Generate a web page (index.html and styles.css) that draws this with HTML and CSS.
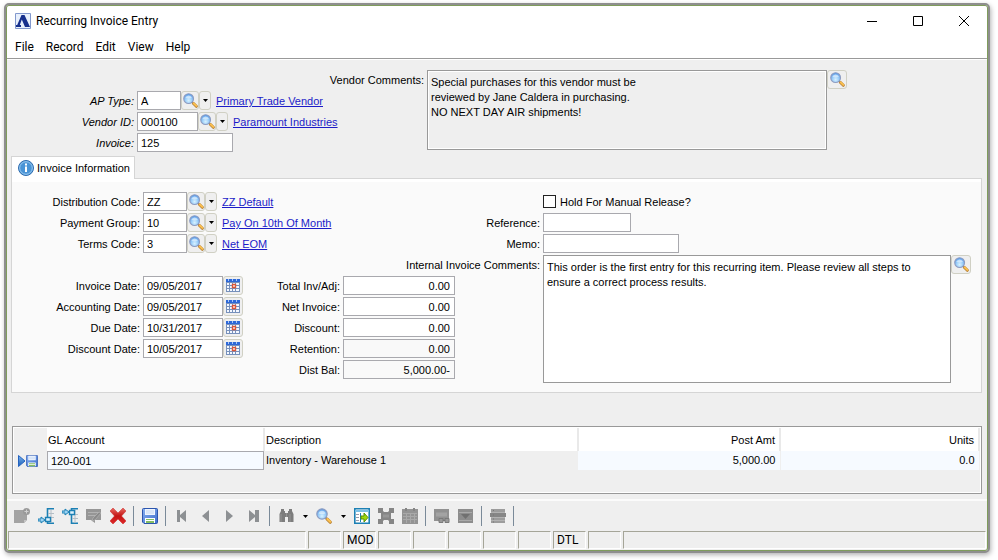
FILE: index.html
```html
<!DOCTYPE html>
<html lang="en">
<head>
    <meta charset="utf-8">
    <title>Recurring Invoice Entry</title>
    <link rel="stylesheet" href="styles.css">
</head>
<body>
    <!-- shared icons -->
    <svg class="defs" aria-hidden="true">
        <defs>
            <radialGradient id="lens" cx="50%" cy="70%" r="65%">
                <stop offset="0" stop-color="#d9f2ff"/>
                <stop offset="0.6" stop-color="#90c8f8"/>
                <stop offset="1" stop-color="#5a9be8"/>
            </radialGradient>
            <linearGradient id="blue" x1="0" y1="0" x2="0" y2="1">
                <stop offset="0" stop-color="#7ab4ee"/>
                <stop offset="1" stop-color="#1d5fb8"/>
            </linearGradient>
            <linearGradient id="disk" x1="0" y1="0" x2="1" y2="1">
                <stop offset="0" stop-color="#85aef0"/>
                <stop offset="1" stop-color="#3f70cc"/>
            </linearGradient>
            <linearGradient id="red" x1="0" y1="0" x2="0" y2="1">
                <stop offset="0" stop-color="#e86a62"/>
                <stop offset="0.5" stop-color="#c41414"/>
                <stop offset="1" stop-color="#df2a2a"/>
            </linearGradient>
        </defs>
        <symbol id="i-search" viewBox="0 0 16 16">
            <path d="M9.5 9.5l2 2" stroke="#7c8698" stroke-width="2"/>
            <path d="M11.2 11.2l3 3" stroke="#b98236" stroke-width="3.2" stroke-linecap="round"/>
            <path d="M11.4 11l2.8 2.8" stroke="#fbc04e" stroke-width="2" stroke-linecap="round"/>
            <circle cx="6" cy="6" r="5.2" fill="url(#lens)" stroke="#8e9cc0" stroke-width="1.2"/>
            <path d="M2.5 5.4a3.6 3.6 0 0 1 7 0q-3.500 1-7 0z" fill="#fff" opacity=".5"/>
        </symbol>
        <symbol id="i-cal" viewBox="0 0 14 13">
            <path d="M0 0h14v13H0z" fill="#7690bb"/>
            <path d="M0 0h14v3H0z" fill="#2d68d8"/>
            <path d="M2 0h1v2H2zM6 0h1v2H6zM10 0h1v2h-1z" fill="#a9c8f6"/>
            <path d="M1 4h2v2H1zM4 4h2v2H4zM7 4h2v2H7zM10 4h3v2h-3zM1 7h2v2H1zM4 7h2v2H4zM10 7h3v2h-3zM1 10h2v2H1zM4 10h2v2H4zM7 10h2v2H7zM10 10h3v2h-3z" fill="#f4f8ff"/>
            <path d="M6.5 5.5h3v3h-3z" fill="#fff" stroke="#db5638" stroke-width="1.4"/>
        </symbol>
        <symbol id="i-disk" viewBox="0 0 16 16">
            <path d="M1.5.5h13a1 1 0 0 1 1 1v13a1 1 0 0 1-1 1H2l-1.500-1.500v-12.500a1 1 0 0 1 1-1z" fill="url(#disk)" stroke="#2c55ad"/>
            <path d="M3 1h10v6H3z" fill="#eef5ff"/>
            <path d="M4 3h8M4 5h8" stroke="#c4d7f2"/>
            <path d="M3 10h10v5H3z" fill="#fff"/>
            <path d="M4 11h8v1H4zM4 13h8v2H4z" fill="#84bd62"/>
        </symbol>
        <symbol id="i-down" viewBox="0 0 5 3">
            <path d="M0 0h5L2.500 3z" fill="#000"/>
        </symbol>
    </svg>

    <div class="window">
        <header class="titlebar">
            <svg class="logo" viewBox="0 0 16 16" aria-hidden="true">
                <path d="M.5.5h15v15H.5z" fill="#e8f0fc" stroke="#8298cd"/>
                <path d="M6.500 2h3L15 14h-5L6.800 6.500 4.800 12H6v2H1v-2h1.200z" fill="#17308d"/>
            </svg>
            <h1>Recurring Invoice Entry</h1>
            <div class="window-buttons">
                <button type="button" aria-label="Minimize"><svg viewBox="0 0 12 12"><path d="M1 6.500h10" stroke="#000"/></svg></button>
                <button type="button" aria-label="Maximize"><svg viewBox="0 0 12 12"><path d="M1.500 1.500h9v9h-9z" fill="none" stroke="#000"/></svg></button>
                <button type="button" aria-label="Close"><svg viewBox="0 0 12 12"><path d="M1 1l10 10M11 1L1 11" stroke="#000"/></svg></button>
            </div>
        </header>

        <nav class="menubar">
            <button type="button">File</button>
            <button type="button">Record</button>
            <button type="button">Edit</button>
            <button type="button">View</button>
            <button type="button">Help</button>
        </nav>

        <section class="vendor">
            <div class="keys">
                <label class="comments-label" for="vendorComments">Vendor Comments:</label>
                <div class="row">
                    <label for="apType">AP Type:</label>
                    <input type="text" id="apType" class="w-code" value="A">
                    <button type="button" class="pick find" aria-label="Find AP type"><svg><use href="#i-search"/></svg></button>
                    <button type="button" class="drop" aria-label="AP type list"><svg><use href="#i-down"/></svg></button>
                    <a href="#">Primary Trade Vendor</a>
                </div>
                <div class="row">
                    <label for="vendorId">Vendor ID:</label>
                    <input type="text" id="vendorId" class="w-id" value="000100">
                    <button type="button" class="pick find" aria-label="Find vendor"><svg><use href="#i-search"/></svg></button>
                    <button type="button" class="drop" aria-label="Vendor list"><svg><use href="#i-down"/></svg></button>
                    <a href="#">Paramount Industries</a>
                </div>
                <div class="row">
                    <label for="invoice">Invoice:</label>
                    <input type="text" id="invoice" class="w-invoice" value="125">
                </div>
            </div>
            <textarea id="vendorComments" class="vendor-comments" readonly>Special purchases for this vendor must be
reviewed by Jane Caldera in purchasing.
NO NEXT DAY AIR shipments!</textarea>
            <button type="button" class="pick" aria-label="Open vendor comments"><svg><use href="#i-search"/></svg></button>
        </section>

        <div class="tabs">
            <button type="button" class="tab">
                <svg viewBox="0 0 16 16" aria-hidden="true">
                    <circle cx="8" cy="8" r="7.500" fill="#4a94d6" stroke="#2f6cae"/>
                    <circle cx="8" cy="8" r="6.300" fill="none" stroke="#9ccbf2"/>
                    <path d="M7 6.500h2V12H7zM7 3.500h2v2H7z" fill="#fff"/>
                </svg>
                Invoice Information
            </button>
        </div>

        <main class="panel">
            <div class="terms">
                <div class="row">
                    <label for="distCode">Distribution Code:</label>
                    <input type="text" id="distCode" class="w-code" value="ZZ">
                    <button type="button" class="pick find" aria-label="Find distribution code"><svg><use href="#i-search"/></svg></button>
                    <button type="button" class="drop" aria-label="Distribution code list"><svg><use href="#i-down"/></svg></button>
                    <a href="#">ZZ Default</a>
                </div>
                <div class="row">
                    <label for="payGroup">Payment Group:</label>
                    <input type="text" id="payGroup" class="w-code" value="10">
                    <button type="button" class="pick find" aria-label="Find payment group"><svg><use href="#i-search"/></svg></button>
                    <button type="button" class="drop" aria-label="Payment group list"><svg><use href="#i-down"/></svg></button>
                    <a href="#">Pay On 10th Of Month</a>
                </div>
                <div class="row">
                    <label for="termsCode">Terms Code:</label>
                    <input type="text" id="termsCode" class="w-code" value="3">
                    <button type="button" class="pick find" aria-label="Find terms code"><svg><use href="#i-search"/></svg></button>
                    <button type="button" class="drop" aria-label="Terms code list"><svg><use href="#i-down"/></svg></button>
                    <a href="#">Net EOM</a>
                </div>

                <div class="figures">
                    <div class="dates">
                        <div class="row">
                            <label for="invoiceDate">Invoice Date:</label>
                            <input type="text" id="invoiceDate" class="w-date" value="09/05/2017">
                            <button type="button" class="pick" aria-label="Pick invoice date"><svg class="cal"><use href="#i-cal"/></svg></button>
                        </div>
                        <div class="row">
                            <label for="acctDate">Accounting Date:</label>
                            <input type="text" id="acctDate" class="w-date" value="09/05/2017">
                            <button type="button" class="pick" aria-label="Pick accounting date"><svg class="cal"><use href="#i-cal"/></svg></button>
                        </div>
                        <div class="row">
                            <label for="dueDate">Due Date:</label>
                            <input type="text" id="dueDate" class="w-date" value="10/31/2017">
                            <button type="button" class="pick" aria-label="Pick due date"><svg class="cal"><use href="#i-cal"/></svg></button>
                        </div>
                        <div class="row">
                            <label for="discDate">Discount Date:</label>
                            <input type="text" id="discDate" class="w-date" value="10/05/2017">
                            <button type="button" class="pick" aria-label="Pick discount date"><svg class="cal"><use href="#i-cal"/></svg></button>
                        </div>
                    </div>
                    <div class="totals">
                        <div class="row">
                            <label for="total">Total Inv/Adj:</label>
                            <input type="text" id="total" value="0.00">
                        </div>
                        <div class="row">
                            <label for="net">Net Invoice:</label>
                            <input type="text" id="net" value="0.00">
                        </div>
                        <div class="row">
                            <label for="discount">Discount:</label>
                            <input type="text" id="discount" value="0.00">
                        </div>
                        <div class="row">
                            <label for="retention">Retention:</label>
                            <input type="text" id="retention" value="0.00" readonly>
                        </div>
                        <div class="row">
                            <label for="distBal">Dist Bal:</label>
                            <input type="text" id="distBal" value="5,000.00-" readonly>
                        </div>
                    </div>
                </div>
            </div>

            <div class="notes">
                <div class="row hold">
                    <input type="checkbox" id="hold">
                    <label for="hold">Hold For Manual Release?</label>
                </div>
                <div class="row">
                    <label for="reference">Reference:</label>
                    <input type="text" id="reference" class="w-ref">
                </div>
                <div class="row">
                    <label for="memo">Memo:</label>
                    <input type="text" id="memo" class="w-memo">
                </div>
                <div class="row tall">
                    <label for="comments">Internal Invoice Comments:</label>
                    <textarea id="comments">This order is the first entry for this recurring item. Please review all steps to
ensure a correct process results.</textarea>
                    <button type="button" class="pick" aria-label="Open internal comments"><svg><use href="#i-search"/></svg></button>
                </div>
            </div>
        </main>

        <div class="lines">
            <table>
                <thead>
                    <tr>
                        <td class="marker"></td>
                        <th class="account">GL Account</th>
                        <th class="desc">Description</th>
                        <th class="amount">Post Amt</th>
                        <th class="units">Units</th>
                    </tr>
                </thead>
                <tbody>
                    <tr>
                        <td class="marker">
                            <svg viewBox="0 0 20 14" aria-hidden="true">
                                <path d="M.5 1.500L7 7 .5 12.500z" fill="url(#blue)" stroke="#2463c0"/>
                                <use href="#i-disk" x="8" y="1" width="12" height="12"/>
                            </svg>
                        </td>
                        <td><input type="text" aria-label="GL Account" value="120-001"></td>
                        <td class="desc">Inventory - Warehouse 1</td>
                        <td class="amount">5,000.00</td>
                        <td class="units">0.0</td>
                    </tr>
                </tbody>
            </table>
        </div>

        <div class="toolbar">
            <button type="button" aria-label="New record"><svg viewBox="0 0 16 16"><path d="M0 2h10v3h3v7l-3 3H0z" fill="#a3a3a3"/><path d="M10 15v-3h3z" fill="#c4c4c4"/><circle cx="12.500" cy="3.500" r="3.500" fill="#999"/><path d="M12.500 1.500v4M10.500 3.500h4" stroke="#d0d0d0"/></svg></button>
            <button type="button" aria-label="Insert row below"><svg viewBox="0 0 16 16"><path d="M16 .8H9.500v14.400H16" fill="none" stroke="#1c80b4" stroke-width="1.600"/><path d="M10 5.500h6M10 9.500h6M13 2v13" stroke="#b4bec6"/><path d="M0 11h3V9l4 3-4 3v-2H0z" fill="#9bd3f4" stroke="#1c80b4"/><path d="M7.500 9.500h5v4h-5z" fill="#dff2fd" stroke="#1c80b4" stroke-width="1.400"/></svg></button>
            <button type="button" aria-label="Insert row above"><svg viewBox="0 0 16 16"><path d="M16 .8H9.500v14.400H16" fill="none" stroke="#1c80b4" stroke-width="1.600"/><path d="M10 6.500h6M10 10.500h6M13 2v13" stroke="#b4bec6"/><path d="M0 3h3V1l4 3-4 3V5H0z" fill="#9bd3f4" stroke="#1c80b4"/><path d="M7.500 2.500h5v4h-5z" fill="#dff2fd" stroke="#1c80b4" stroke-width="1.400"/></svg></button>
            <button type="button" aria-label="Edit row"><svg viewBox="0 0 16 16"><path d="M0 1h15v11H9v3l-4-3H0z" fill="#969696"/><path d="M2 4.500h11M2 7.500h8" stroke="#b2b2b2"/><path d="M15 5l-6 7-3 1 1-3 6-6z" fill="#8a8a8a" stroke="#b4b4b4" stroke-width=".7"/></svg></button>
            <button type="button" aria-label="Delete"><svg viewBox="0 0 16 16"><path d="M3 0l5 5 5-5 3 3-4.500 5L16 13l-3 3-5-5-5 5-3-3 4.500-5L0 3z" fill="url(#red)" stroke="#c22" stroke-width=".5"/></svg></button>
            <span class="sep"></span>
            <button type="button" aria-label="Save"><svg><use href="#i-disk"/></svg></button>
            <span class="sep"></span>
            <button type="button" aria-label="First"><svg viewBox="0 0 16 16"><path d="M3 2h3v5l6-5v12L6 9v5H3z" fill="#8d9093"/></svg></button>
            <button type="button" aria-label="Previous"><svg viewBox="0 0 16 16"><path d="M11 2v12L4 8z" fill="#8d9093"/></svg></button>
            <button type="button" aria-label="Next"><svg viewBox="0 0 16 16"><path d="M4 2v12l7-6z" fill="#8d9093"/></svg></button>
            <button type="button" aria-label="Last"><svg viewBox="0 0 16 16"><path d="M3 2l6 5V2h4v12H9V9l-6 5z" fill="#8d9093"/></svg></button>
            <span class="sep"></span>
            <button type="button" aria-label="Find"><svg viewBox="0 0 16 16"><path d="M3 1h3v2h1v2h3V3h1V1h3v2l1.500 3v8H10V9H7v5H1.500V6L3 3z" fill="#7d7d7d"/><path d="M3 6v8M12 6v8M8.500 5v4" stroke="#959595"/></svg></button>
            <button type="button" class="arrow" aria-label="Find options"><svg><use href="#i-down"/></svg></button>
            <button type="button" aria-label="Inquiry"><svg><use href="#i-search"/></svg></button>
            <button type="button" class="arrow" aria-label="Inquiry options"><svg><use href="#i-down"/></svg></button>
            <button type="button" aria-label="Drill down"><svg viewBox="0 0 16 16"><path d="M.8.8h14.400v14.400H.8z" fill="#fff" stroke="#1c80b4" stroke-width="1.600"/><path d="M1 3h14" stroke="#7cc0e6" stroke-width="2"/><path d="M2 6.500h3M2 9.500h3M2 12.500h3" stroke="#99a"/><path d="M6.500 5v9" stroke="#1c80b4"/><path d="M7 8h3V5l4 4.500-4 4.500v-3H7z" fill="#9fd80c" stroke="#578f05"/></svg></button>
            <button type="button" aria-label="Workflow"><svg viewBox="0 0 16 16"><path d="M1 1l14 14M15 1L1 15" stroke="#8e8e8e" stroke-width="3"/><path d="M0 0h5v5H0zM11 0h5v5h-5zM0 11h5v5H0zM11 11h5v5h-5zM3 4h10v8H3z" fill="#868686"/><path d="M5 6.500h6v3H5z" fill="#979797"/></svg></button>
            <button type="button" aria-label="Calendar"><svg viewBox="0 0 16 16"><path d="M0 1h16v15H0z" fill="#949494"/><path d="M1 5.500h14M1 8.500h14M1 11.500h14M4.500 5v10M8.500 5v10M12.500 5v10" stroke="#a9a9a9"/><path d="M3 0h2v3H3zM11 0h2v3h-2z" fill="#858585"/></svg></button>
            <span class="sep"></span>
            <button type="button" aria-label="View document"><svg viewBox="0 0 16 16"><path d="M0 1h15v12H0z" fill="#919191"/><path d="M2 4.500h11v4H2z" fill="#a3a3a3"/><path d="M5 10.500h4v4H5zM11 10.500h4v4h-4z" fill="#999" stroke="#7a7a7a"/><path d="M9 12.500h2" stroke="#777"/></svg></button>
            <button type="button" aria-label="Filter"><svg viewBox="0 0 16 16"><path d="M0 1h15v14H0z" fill="#8d8d8d"/><path d="M1 4.500h13M1 12.500h13" stroke="#a9a9a9"/><path d="M3 6h9l-4.500 5z" fill="#707070"/></svg></button>
            <span class="sep"></span>
            <button type="button" aria-label="List"><svg viewBox="0 0 16 16"><path d="M1 1h14v14H1z" fill="#9c9c9c"/><path d="M0 5h16v4H0z" fill="#868686"/><path d="M1 4.500h14M1 9.500h14M1 12.500h14" stroke="#b2b2b2"/><path d="M3 2.500h1M3 7h1M3 11h1M3 14h1" stroke="#777"/></svg></button>
            <span class="sep"></span>
        </div>

        <footer class="status">
            <span class="wide"></span>
            <span></span>
            <span>MOD</span>
            <span></span>
            <span></span>
            <span></span>
            <span></span>
            <span></span>
            <span>DTL</span>
            <span></span>
            <span class="rest"></span>
        </footer>
    </div>
</body>
</html>
```
FILE: styles.css
```css
* {
    box-sizing: border-box;
}

body {
    margin: 0;
    padding: 3px 8px 7px 4px;
    min-height: 100vh;
    display: flex;
    background: #fff;
    color: #000;
    font: 11px/15px "Liberation Sans", Arial, sans-serif;
}

.defs {
    position: absolute;
    width: 0;
    height: 0;
}

svg {
    display: block;
    width: 16px;
    height: 16px;
}

button, input, textarea {
    font: inherit;
    color: inherit;
    margin: 0;
}

button {
    border: 0;
    padding: 0;
    background: none;
}

a {
    color: #1c1cc8;
}

/* window frame */
.window {
    flex: 1;
    display: flex;
    flex-direction: column;
    padding: 1px;
    border: 2px solid #8e8e8e;
    border-radius: 5px;
    background: #efefef;
    box-shadow: inset 0 0 0 1px #7f9c5c, 1px 2px 5px rgba(0, 0, 0, 0.3);
}

.titlebar {
    display: flex;
    align-items: center;
    height: 30px;
    padding-left: 8px;
    background: #fff;
    border-radius: 3px 3px 0 0;
}

.titlebar h1 {
    flex: 1;
    margin: 0 0 0 5px;
    font: 12px/16px Roboto, "Open Sans", sans-serif;
}

.window-buttons {
    display: flex;
}

.window-buttons button {
    width: 46px;
    height: 30px;
    display: flex;
    align-items: center;
    justify-content: center;
}

.window-buttons svg {
    width: 12px;
    height: 12px;
}

.menubar {
    display: flex;
    gap: 12px;
    height: 23px;
    padding-left: 8px;
    background: #fff;
    border-bottom: 1px solid #999;
    box-shadow: 0 1px #fff;
    font: 12px/22px Roboto, "Open Sans", sans-serif;
}

/* form rows */
.row {
    display: flex;
    align-items: center;
    height: 19px;
    margin-bottom: 2px;
}

.row label {
    width: 128px;
    margin-right: 3px;
    text-align: right;
    white-space: nowrap;
}

.row label, .row a {
    line-height: 17px;
    padding-top: 2px;
}

.row a {
    margin-left: 5px;
    white-space: nowrap;
}

input[type="text"] {
    height: 19px;
    padding: 0 3px;
    border: 1px solid #a9a9ae;
    border-radius: 0;
    background: #fff;
}

input[readonly] {
    background: #f9f9f9;
}

textarea {
    padding: 4px 3px;
    border: 1px solid #999;
    border-radius: 0;
    background: #fff;
    resize: none;
}

.w-code { width: 44px; }
.w-id { width: 61px; }
.w-invoice { width: 96px; }
.w-date { width: 80px; }
.w-ref { width: 88px; }
.w-memo { width: 136px; }

.pick, .drop {
    display: flex;
    align-items: center;
    justify-content: center;
    flex: none;
    height: 19px;
    border: 1px solid #d0d0c4;
    border-radius: 3px;
    background: #efefef;
}

.pick {
    width: 20px;
}

.find {
    width: 18px;
}

.pick svg {
    width: 15px;
    height: 15px;
}

.pick .cal {
    width: 14px;
    height: 13px;
}

.drop {
    width: 12px;
}

.drop svg, .arrow svg {
    width: 5px;
    height: 3px;
}

/* vendor header */
.vendor {
    display: flex;
    align-items: flex-start;
    padding: 11px 0 2px;
}

.keys {
    width: 417px;
    margin-right: 3px;
}

.keys .row label {
    width: 127px;
    font-style: italic;
}

.comments-label {
    display: block;
    height: 21px;
    line-height: 20px;
    text-align: right;
}

.vendor-comments {
    width: 400px;
    height: 80px;
    background: #efefef;
    box-shadow: inset 0 0 0 1px #fff;
}

/* tab and its panel */
.tabs {
    display: flex;
    padding-left: 4px;
}

.tab {
    display: flex;
    align-items: center;
    gap: 3px;
    height: 23px;
    margin-bottom: -1px;
    padding: 0 4px 0 6px;
    border: 1px solid #d5d5d5;
    border-bottom: 0;
    background: #fff;
    z-index: 1;
}

.panel {
    display: flex;
    margin: 0 5px 33px 4px;
    padding: 13px 10px 9px 0;
    border: 1px solid #d5d5d5;
    background: #fafafa;
    box-shadow: inset 0 3px #fff;
}

.terms {
    flex: none;
    width: 394px;
}

.figures {
    display: flex;
    padding-top: 21px;
}

.totals .row label {
    width: 97px;
}

.totals input {
    width: 112px;
    padding-right: 4px;
    text-align: right;
}

.totals .row:last-child {
    margin-bottom: 0;
}

.notes {
    flex: 1;
}

.notes .row label {
    width: 134px;
}

.notes .hold {
    padding-left: 137px;
}

.notes .hold label {
    width: auto;
}

.hold input {
    appearance: none;
    width: 13px;
    height: 13px;
    margin-right: 4px;
    border: 1px solid #222;
    background: #fff;
}

.notes .tall {
    align-items: flex-start;
    height: 128px;
    margin-bottom: 0;
}

.tall textarea {
    flex: 1;
    min-width: 0;
    height: 128px;
}

/* detail lines */
.lines {
    flex: 1;
    margin: 0 5px 5px;
    padding: 1px;
    min-height: 67px;
    border: 1px solid #999;
    box-shadow: inset 0 0 0 1px #fff;
}

table {
    width: 100%;
    table-layout: fixed;
    border-collapse: collapse;
}

th, td {
    padding: 0;
    text-align: left;
    font-weight: normal;
}

th {
    height: 23px;
    padding: 1px 4px 0 1px;
    border-right: 2px solid #e9e9e9;
    background: #fff;
}

tbody td {
    height: 19px;
}

td.desc {
    padding-left: 2px;
}

.marker {
    width: 33px;
    background: #efefef;
}

.marker svg {
    width: 20px;
    height: 14px;
    margin-left: 4px;
}

.account { width: 217px; }
th.desc { width: 314px; }
.amount { width: 202px; }

th.amount, th.units, td.amount, td.units {
    text-align: right;
}

td.amount, td.units {
    padding-right: 4px;
    border-right: 1px solid #efefef;
    background: #f6faff;
}

table input[type="text"] {
    display: block;
    width: 100%;
    background: #f6faff;
}

/* toolbar */
.toolbar {
    display: flex;
    align-items: center;
    height: 32px;
    padding-left: 3px;
    border-top: 2px solid #fbfbfb;
}

.toolbar button {
    display: flex;
    justify-content: center;
    align-items: center;
    width: 24px;
    height: 24px;
}

.toolbar .arrow {
    width: 14px;
}

.sep {
    width: 5px;
    height: 20px;
    margin-left: 3px;
    border-left: 1px solid #7a8a99;
}

/* status bar */
.status {
    display: flex;
    gap: 2px;
    padding: 0 1px 1px;
    font: 12px/16px Roboto, "Open Sans", sans-serif;
}

.status span {
    width: 33px;
    height: 18px;
    padding-left: 3px;
    border: 1px solid;
    border-color: #a5a598 #fff #fff #a5a598;
}

.status .wide {
    width: 298px;
}

.status .rest {
    flex: 1;
}
```
